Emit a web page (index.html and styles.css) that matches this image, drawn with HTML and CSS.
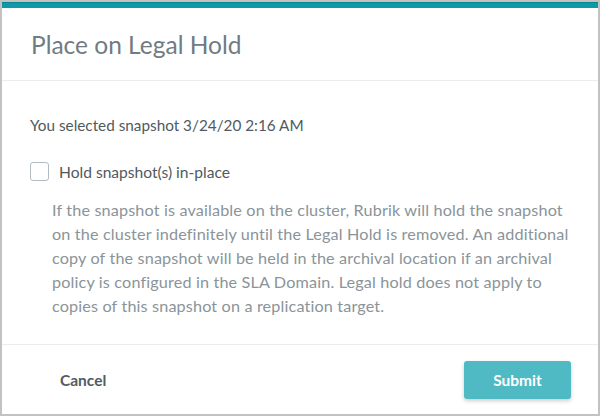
FILE: index.html
```html
<!DOCTYPE html>
<html lang="en">
<head>
    <meta charset="UTF-8">
    <meta name="viewport" content="width=device-width, initial-scale=1.0">
    <title>Place on Legal Hold</title>
    <link rel="stylesheet" href="styles.css">
</head>
<body>
    <div class="dialog">
        <div class="accent"></div>
        <div class="dialog-header">
            <h1>Place on Legal Hold</h1>
        </div>

        <div class="dialog-body">
            <p class="selected">You selected snapshot 3/24/20 2:16 AM</p>
            <label class="check-row">
                <span class="checkbox"></span>
                <span class="check-label">Hold snapshot(s) in-place</span>
            </label>
            <p class="help">If the snapshot is available on the cluster, Rubrik will hold the snapshot on the cluster indefinitely until the Legal Hold is removed. An additional copy of the snapshot will be held in the archival location if an archival policy is configured in the SLA Domain. Legal hold does not apply to copies of this snapshot on a replication target.</p>
        </div>

        <div class="dialog-footer">
            <button class="btn-cancel">Cancel</button>
            <button class="btn-submit">Submit</button>
        </div>
    </div>
</body>
</html>
```

FILE: styles.css
```css
body {
    margin: 0;
    font-family: Lato, "Open Sans", sans-serif;
    background-color: #fff;
}
.dialog {
    box-sizing: border-box;
    width: 600px;
    height: 416px;
    border: 2px solid #c2c2c2;
    display: flex;
    flex-direction: column;
    background-color: #fff;
}
.accent {
    height: 6px;
    background-color: #0d99a6;
    border-top: 1px solid #0b8590;
    box-sizing: border-box;
}
.dialog-header {
    height: 72px;
    display: flex;
    align-items: center;
    padding: 0 29px;
    border-bottom: 1px solid #ececec;
}
h1 {
    margin: 0;
    font-size: 24.5px;
    font-weight: 400;
    color: #6f7c83;
}
.dialog-body {
    flex: 1;
    padding: 0 22px 0 28px;
}
.selected {
    margin: 33px 0 0;
    font-size: 15.3px;
    line-height: 22px;
    color: #505a60;
}
.check-row {
    display: flex;
    align-items: center;
    margin-top: 26px;
}
.checkbox {
    box-sizing: border-box;
    width: 19px;
    height: 19px;
    border: 1.5px solid #b3bcc1;
    border-radius: 3px;
}
.check-label {
    margin-left: 10px;
    font-size: 15.6px;
    color: #505a60;
}
.help {
    margin: 17px 0 0 22px;
    font-size: 16.2px;
    letter-spacing: 0.15px;
    line-height: 24px;
    color: #8a9499;
}
.dialog-footer {
    height: 69px;
    border-top: 1px solid #ececec;
    display: flex;
    align-items: center;
    justify-content: space-between;
    padding: 0 27px 0 28px;
}
button {
    font-family: inherit;
    font-size: 15.5px;
    font-weight: 700;
    border: none;
    cursor: pointer;
}
.btn-cancel {
    background: none;
    color: #525c62;
    padding: 0 30px;
}
.btn-submit {
    width: 107px;
    height: 38px;
    background-color: #4fb9c4;
    color: #fff;
    border-radius: 3px;
    box-shadow: 0 2px 4px rgba(0, 0, 0, 0.2);
}
```
